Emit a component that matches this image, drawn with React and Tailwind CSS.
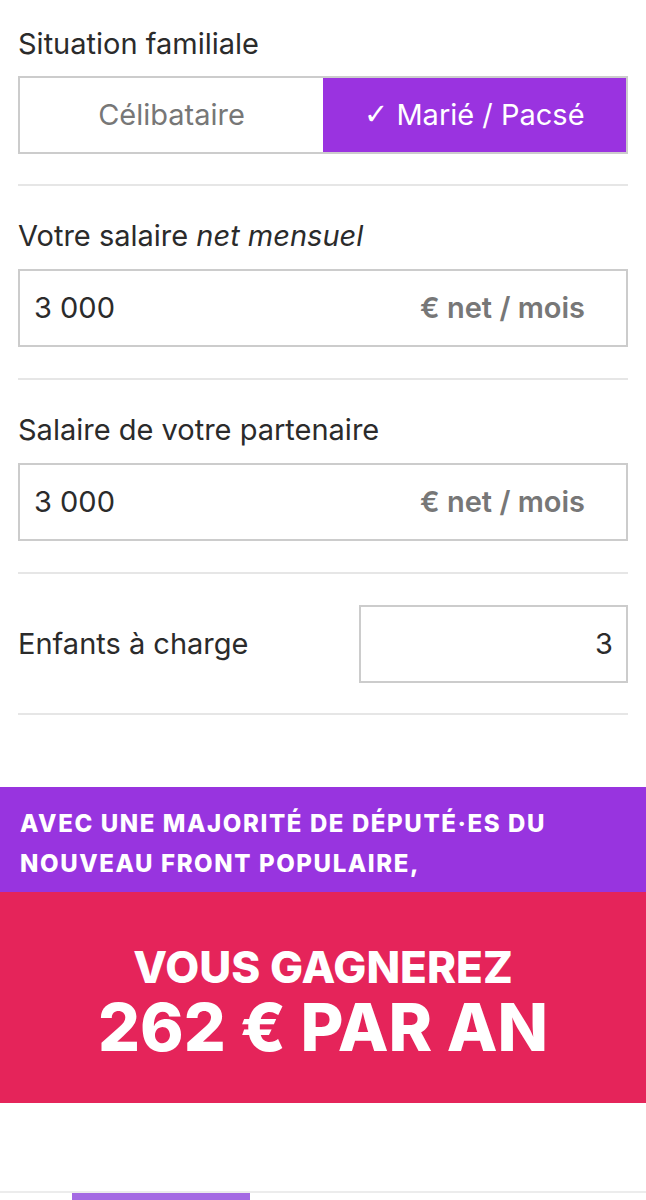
export default function App() {
  return (
    <div className="w-[646px] h-[1200px] bg-white overflow-hidden relative" style={{ fontFamily: 'Inter, "Liberation Sans", sans-serif' }}>
      <div className="px-[18px]">
        <div className="pt-[26px] pb-[30px] border-b-2 border-[#e6e6e6]">
          <div className="text-[29px] leading-[36px] text-[#2b2b2b] mb-[14px]">Situation familiale</div>
          <div className="flex h-[78px] border-2 border-[#cccccc]">
            <div className="flex-1 flex items-center justify-center text-[29px] text-[#777777]">Célibataire</div>
            <div className="flex-1 flex items-center justify-center text-[29px] text-white bg-[#9a33e0]">
              <span className="mr-[8px] font-light" style={{ fontFamily: '"DejaVu Sans", sans-serif' }}>✓</span>Marié / Pacsé
            </div>
          </div>
        </div>

        <div className="pt-[32px] pb-[31px] border-b-2 border-[#e6e6e6]">
          <div className="text-[29px] leading-[36px] text-[#2b2b2b] mb-[15px]">
            Votre salaire <i>net mensuel</i>
          </div>
          <div className="flex items-center justify-between h-[78px] border-2 border-[#cccccc] pl-[14px] pr-[41px]">
            <span className="text-[29px] text-[#2b2b2b]">3 000</span>
            <span className="text-[29px] font-semibold text-[#777777]">€ net / mois</span>
          </div>
        </div>

        <div className="pt-[32px] pb-[31px] border-b-2 border-[#e6e6e6]">
          <div className="text-[29px] leading-[36px] text-[#2b2b2b] mb-[15px]">Salaire de votre partenaire</div>
          <div className="flex items-center justify-between h-[78px] border-2 border-[#cccccc] pl-[14px] pr-[41px]">
            <span className="text-[29px] text-[#2b2b2b]">3 000</span>
            <span className="text-[29px] font-semibold text-[#777777]">€ net / mois</span>
          </div>
        </div>

        <div className="pt-[31px] pb-[30px] border-b-2 border-[#e6e6e6] flex items-center justify-between">
          <span className="text-[29px] text-[#2b2b2b]">Enfants à charge</span>
          <div className="w-[269px] h-[78px] border-2 border-[#cccccc] flex items-center justify-end pr-[13px] text-[29px] text-[#2b2b2b]">3</div>
        </div>
      </div>

      <div className="mt-[72px]">
        <div className="bg-[#9834df] h-[105px] px-[20px] pt-[17px] text-white font-extrabold text-[24px] leading-[40px] tracking-[1.6px]">
          AVEC UNE MAJORITÉ DE DÉPUTÉ·ES DU<br />NOUVEAU FRONT POPULAIRE,
        </div>
        <div className="bg-[#e5245a] h-[211px] flex flex-col items-center justify-center text-white font-extrabold pt-[4px]">
          <div className="text-[44px] leading-[54px]">VOUS GAGNEREZ</div>
          <div className="text-[66px] leading-[66px]">262 € PAR AN</div>
        </div>
      </div>

      <div className="absolute left-0 right-0 top-[1191px] h-[2px] bg-[#ececec]" />
      <div className="absolute left-[72px] w-[178px] top-[1193px] h-[7px] bg-[#a46ae3]" />
    </div>
  );
}
